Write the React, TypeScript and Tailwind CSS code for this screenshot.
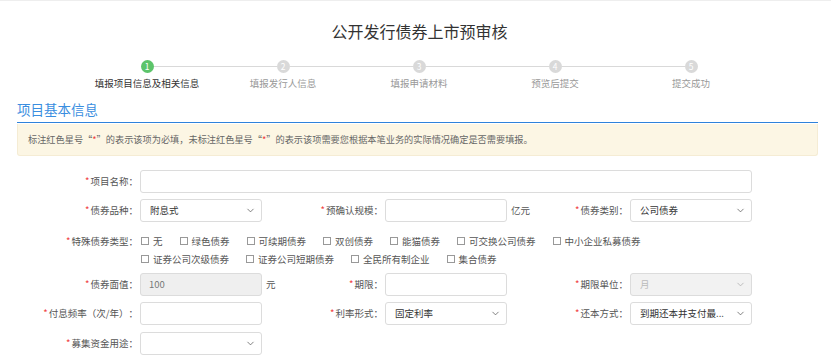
import { ChevronDown } from "lucide-react";

const steps = ["填报项目信息及相关信息", "填报发行人信息", "填报申请材料", "预览后提交", "提交成功"];

const specialTypes = [
  ["无", "绿色债券", "可续期债券", "双创债券", "能猫债券", "可交换公司债券", "中小企业私募债券"],
  ["证券公司次级债券", "证券公司短期债券", "全民所有制企业", "集合债券"],
];

function Label({ text }: { text: string }) {
  return (
    <div className="flex w-[123px] shrink-0 items-center justify-end pr-[2px] text-[9.5px] text-[#555]">
      <span className="mr-[1px] text-[#f03a3a]">*</span>
      {text}：
    </div>
  );
}

function Input({ value, disabled, w = "w-[122px]" }: { value?: string; disabled?: boolean; w?: string }) {
  return (
    <div
      className={`flex h-[23px] ${w} shrink-0 items-center rounded-[3px] border border-[#dcdcdc] px-[8px] text-[9.5px] ${
        disabled ? "bg-[#efefef] text-[#777]" : "bg-white text-[#333]"
      }`}
    >
      {value}
    </div>
  );
}

function Select({ value, disabled }: { value?: string; disabled?: boolean }) {
  return (
    <div
      className={`flex h-[23px] w-[122px] shrink-0 items-center justify-between rounded-[3px] border border-[#dcdcdc] pl-[9px] pr-[5px] text-[9.5px] ${
        disabled ? "bg-[#f2f2f2] text-[#bbb]" : "bg-white text-[#333]"
      }`}
    >
      <span className="truncate">{value}</span>
      <ChevronDown
        size={11}
        strokeWidth={1.6}
        className={`shrink-0 ${disabled ? "text-[#aaa]" : "text-[#555]"}`}
      />
    </div>
  );
}

function Field({ label, children, unit }: { label: string; children: React.ReactNode; unit?: string }) {
  return (
    <div className="relative flex w-[245px] items-center">
      <Label text={label} />
      {children}
      {unit && (
        <span className="absolute left-[249px] top-[4px] whitespace-nowrap text-[9.5px] text-[#555]">{unit}</span>
      )}
    </div>
  );
}

export default function App() {
  return (
    <div className="h-[358px] w-[831px] overflow-hidden border-t border-[#eeeeee] bg-white font-['Noto_Sans_CJK_SC',sans-serif] [text-spacing-trim:space-all]">
      <h1 className="mt-[19px] pl-[8px] text-center text-[16px] leading-[22px] text-[#333]">公开发行债券上市预审核</h1>

      <div className="mt-[18px] ml-[79px] flex">
        {steps.map((s, i) => (
          <div key={s} className="flex w-[136px] flex-col items-center">
            <div className="flex w-full items-center">
              <div className={`h-[1px] flex-1 ${i === 0 ? "" : "bg-[#d9d9d9]"}`} />
              <div
                className={`flex h-[13px] w-[13px] items-center justify-center rounded-full text-[8.5px] leading-none text-white ${
                  i === 0 ? "bg-[#5cc46a]" : "bg-[#d9d9d9]"
                }`}
              >
                {i + 1}
              </div>
              <div className={`h-[1px] flex-1 ${i === steps.length - 1 ? "" : "bg-[#d9d9d9]"}`} />
            </div>
            <div
              className={`mt-[4px] whitespace-nowrap text-[9.5px] leading-[12px] ${
                i === 0 ? "text-[#333]" : "text-[#999]"
              }`}
            >
              {s}
            </div>
          </div>
        ))}
      </div>

      <div className="pl-[17px] pr-[13px]">
        <h2 className="mt-[11px] text-[13.5px] leading-[18px] text-[#3a8ee0]">项目基本信息</h2>
        <div className="mt-[4px] h-[1px] bg-[#2f82da]" />
        <div className="mt-[1px] flex h-[32px] items-center rounded-b-[3px] border border-t-0 border-[#f5ecd4] bg-[#fcf6e4] pl-[10px] text-[9.2px] text-[#666]">
          标注红色星号“<span className="text-[#f03a3a]">*</span>”的表示该项为必填，未标注红色星号“ <span className="text-[#f03a3a]">*</span>”的表示该项需要您根据本笔业务的实际情况确定是否需要填报。
        </div>

        <div className="mt-[14px] flex items-center">
          <Label text="项目名称" />
          <Input w="w-[612px]" />
        </div>

        <div className="mt-[6px] flex">
          <Field label="债券品种">
            <Select value="附息式" />
          </Field>
          <Field label="预确认规模" unit="亿元">
            <Input />
          </Field>
          <Field label="债券类别">
            <Select value="公司债券" />
          </Field>
        </div>

        <div className="mt-[10px] flex">
          <div className="flex h-[18px] w-[123px] shrink-0 items-center justify-end pr-[2px] text-[9.5px] text-[#555]">
            <span className="mr-[1px] text-[#f03a3a]">*</span>特殊债券类型：
          </div>
          <div className="flex flex-col">
            {specialTypes.map((line, li) => (
              <div key={li} className="flex h-[18px] items-center gap-x-[17px] pl-[1px]">
                {line.map((t) => (
                  <label key={t} className="flex items-center gap-[4px] text-[9.5px] text-[#555]">
                    <span className="h-[8px] w-[8px] border border-[#999] bg-white" />
                    {t}
                  </label>
                ))}
              </div>
            ))}
          </div>
        </div>

        <div className="mt-[5px] flex">
          <Field label="债券面值" unit="元">
            <Input value="100" disabled />
          </Field>
          <Field label="期限">
            <Input />
          </Field>
          <Field label="期限单位">
            <Select value="月" disabled />
          </Field>
        </div>

        <div className="mt-[6px] flex">
          <Field label="付息频率（次/年）">
            <Input />
          </Field>
          <Field label="利率形式">
            <Select value="固定利率" />
          </Field>
          <Field label="还本方式">
            <Select value="到期还本并支付最..." />
          </Field>
        </div>

        <div className="mt-[7px] flex">
          <Field label="募集资金用途">
            <Select />
          </Field>
        </div>
      </div>
    </div>
  );
}
